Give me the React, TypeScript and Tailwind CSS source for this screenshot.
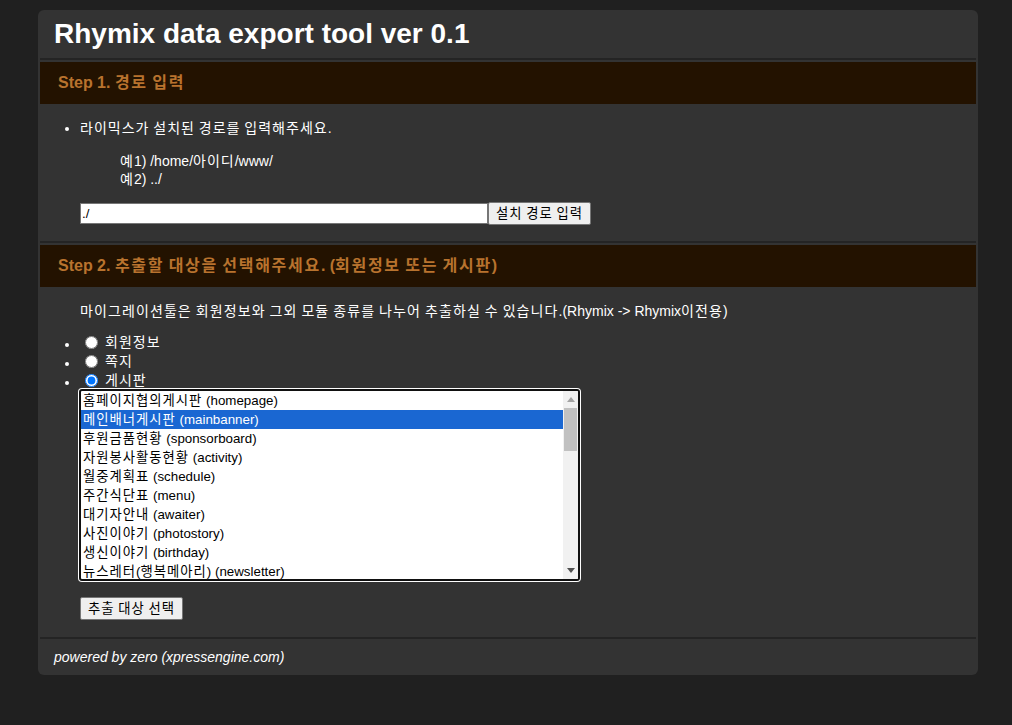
import React from "react";

const FONT = { fontFamily: '"Liberation Sans", Arial, "Noto Sans CJK KR", sans-serif' };

const BOARDS = [
  "홈페이지협의게시판 (homepage)",
  "메인배너게시판 (mainbanner)",
  "후원금품현황 (sponsorboard)",
  "자원봉사활동현황 (activity)",
  "월중계획표 (schedule)",
  "주간식단표 (menu)",
  "대기자안내 (awaiter)",
  "사진이야기 (photostory)",
  "생신이야기 (birthday)",
  "뉴스레터(행복메아리) (newsletter)",
];

// hangul runs get a bit of extra spacing so widths line up with the original font
function Ko({ text, cls }: { text: string; cls: string }) {
  const parts = text.split(/([\uAC00-\uD7A3\u3131-\u318E]+)/);
  return (
    <>
      {parts.map((p, i) =>
        /[\uAC00-\uD7A3\u3131-\u318E]/.test(p) ? (
          <span key={i} className={cls}>
            {p}
          </span>
        ) : (
          <React.Fragment key={i}>{p}</React.Fragment>
        )
      )}
    </>
  );
}

function StepTitle({ step, text }: { step: string; text: string }) {
  return (
    <div className="mx-[2px] h-[42px] bg-[#231200] flex items-center px-[18px] text-[16px] font-bold text-[#b8732e]">
      <span>
        {step} <Ko text={text} cls="tracking-[1.7px]" />
      </span>
    </div>
  );
}

function Separator() {
  return <div className="mx-[2px] h-[2px] bg-[#242424]" />;
}

function BoardList() {
  return (
    <div className="relative w-[501px] h-[192px] rounded-[3px] border-2 border-[#111] ring-1 ring-white bg-white flex overflow-hidden">
      <div className="flex-1 flex flex-col">
        {BOARDS.map((b, i) => (
          <div
            key={b}
            className={
              i === 1
                ? "h-[19px] leading-[19px] px-[2px] text-[13.33px] whitespace-nowrap bg-[#1a67d2] text-white"
                : "h-[19px] leading-[19px] px-[2px] text-[13.33px] whitespace-nowrap text-black"
            }
          >
            <Ko text={b} cls="tracking-[1px]" />
          </div>
        ))}
      </div>
      {/* scrollbar */}
      <div className="w-[15px] bg-[#f1f1f1] flex flex-col items-center">
        <div className="h-[17px] flex items-center justify-center">
          <svg width="8" height="5" viewBox="0 0 8 5">
            <path d="M0 5 L4 0 L8 5 Z" fill="#a3a3a3" />
          </svg>
        </div>
        <div className="w-[13px] h-[43px] bg-[#c1c1c1]" />
        <div className="flex-1" />
        <div className="h-[17px] flex items-center justify-center">
          <svg width="8" height="5" viewBox="0 0 8 5">
            <path d="M0 0 L8 0 L4 5 Z" fill="#505050" />
          </svg>
        </div>
      </div>
    </div>
  );
}

function GrayButton({ label }: { label: string }) {
  return (
    <button className="h-[23px] px-[7px] bg-[#efefef] text-black border border-[#767676] rounded-[2px] text-[13.33px]">
      <Ko text={label} cls="tracking-[1px]" />
    </button>
  );
}

export default function App() {
  return (
    <div className="min-h-screen bg-[#202020] pt-[10px] pb-[50px] text-white" style={FONT}>
      <div className="ml-[38px] w-[940px] bg-[#333333] rounded-[6px] overflow-hidden">
        {/* Header */}
        <div className="h-[48px] flex items-center px-[16px]">
          <h1 className="text-[28px] font-bold leading-none">Rhymix data export tool ver 0.1</h1>
        </div>
        <Separator />

        {/* Step 1 */}
        <div className="pt-[2px]">
          <StepTitle step="Step 1." text="경로 입력" />
          <div className="text-[14px] leading-[18px]">
            <ul className="list-disc pl-[40px] mx-[2px] my-[15px]">
              <li>
                <Ko text="라이믹스가 설치된 경로를 입력해주세요." cls="tracking-[1px]" />
              </li>
            </ul>
            <div className="pl-[82px] mb-[14px]">
              <div>
                <Ko text="예1) /home/아이디/www/" cls="tracking-[1px]" />
              </div>
              <div>
                <Ko text="예2) ../" cls="tracking-[1px]" />
              </div>
            </div>
            <div className="pl-[42px] flex items-center pb-[16px]">
              <input
                type="text"
                defaultValue="./"
                className="w-[408px] h-[21px] bg-white text-black border border-[#767676] px-[1px] text-[13.33px] outline-none"
              />
              <GrayButton label="설치 경로 입력" />
            </div>
          </div>
        </div>
        <Separator />

        {/* Step 2 */}
        <div className="pt-[2px]">
          <StepTitle step="Step 2." text="추출할 대상을 선택해주세요. (회원정보 또는 게시판)" />
          <div className="text-[14px] leading-[18px]">
            <p className="pl-[42px] mt-[15px] mb-[13px]">
              <Ko
                text="마이그레이션툴은 회원정보와 그외 모듈 종류를 나누어 추출하실 수 있습니다.(Rhymix -> Rhymix이전용)"
                cls="tracking-[1.1px]"
              />
            </p>
            <ul className="list-disc pl-[42px]">
              <li className="h-[19px] leading-[19px]">
                <label className="flex items-center">
                  <input type="radio" name="target" className="w-[13px] h-[13px] ml-[5px] mr-[7px]" />
                  <span>
                    <Ko text="회원정보" cls="tracking-[1px]" />
                  </span>
                </label>
              </li>
              <li className="h-[19px] leading-[19px]">
                <label className="flex items-center">
                  <input type="radio" name="target" className="w-[13px] h-[13px] ml-[5px] mr-[7px]" />
                  <span>
                    <Ko text="쪽지" cls="tracking-[1px]" />
                  </span>
                </label>
              </li>
              <li className="h-[19px] leading-[19px]">
                <label className="flex items-center">
                  <input type="radio" name="target" defaultChecked className="w-[13px] h-[13px] ml-[5px] mr-[7px]" />
                  <span>
                    <Ko text="게시판" cls="tracking-[1px]" />
                  </span>
                </label>
              </li>
            </ul>
            <div className="pl-[41px] -mt-[1px]">
              <BoardList />
            </div>
            <div className="pl-[42px] pt-[16px] pb-[17px]">
              <GrayButton label="추출 대상 선택" />
            </div>
          </div>
        </div>
        <Separator />

        {/* Footer */}
        <div className="h-[36px] flex items-center px-[16px] text-[14px] italic">
          powered by zero (xpressengine.com)
        </div>
      </div>
    </div>
  );
}
